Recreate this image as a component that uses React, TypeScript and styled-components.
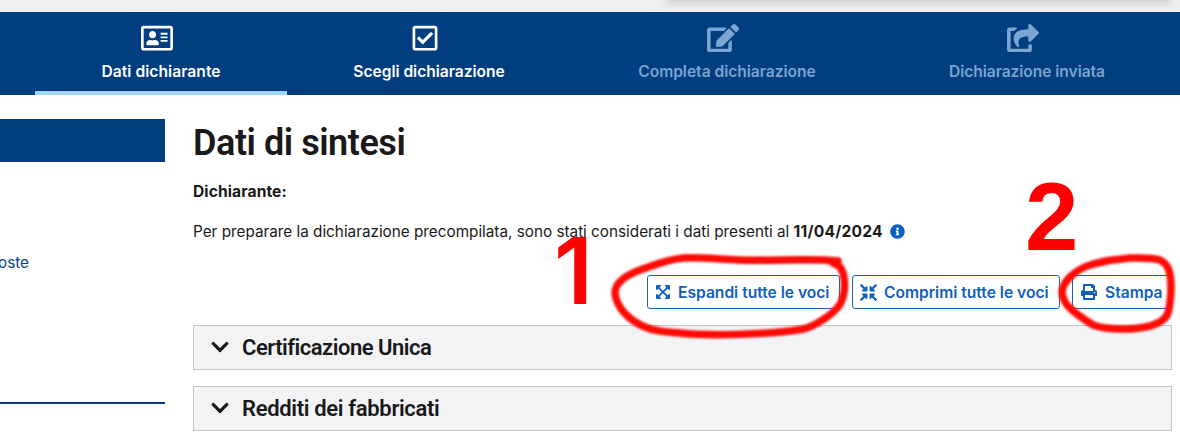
import React from 'react';
import styled, { createGlobalStyle } from 'styled-components';
import {
  FaRegAddressCard, FaRegCheckSquare, FaEdit, FaShareSquare, FaExpandArrowsAlt,
  FaCompressArrowsAlt, FaPrint, FaInfoCircle, FaChevronDown,
} from 'react-icons/fa';

const GlobalStyle = createGlobalStyle`
  *, *::before, *::after { box-sizing: border-box; }
  body { margin: 0; background: #fff; color: #19191a; font: 400 15.3px/24px Inter, sans-serif; overflow: hidden; }
`;

const Page = styled.div`
  position: relative;
  width: 1180px;
  height: 445px;
  overflow: hidden;
`;

const TopStrip = styled.div`
  height: 12px;
  padding-left: 668px;
  background: #eef0f0;
  overflow: hidden;
`;

const FloatingEdge = styled.div`
  width: 502px;
  height: 1px;
  background: #d4d6d6;
  box-shadow: 0 0 8px 3px #d2d4d4;
`;

const Steps = styled.nav`
  display: flex;
  height: 83px;
  padding-left: 35px;
  background: #003e80;
`;

const Step = styled.div<{ $width: number; $active?: boolean; $disabled?: boolean }>`
  display: flex;
  flex-direction: column;
  align-items: center;
  width: ${p => p.$width}px;
  padding-top: 12px;
  border-bottom: 4px solid ${p => (p.$active ? '#a3d4fb' : 'transparent')};
  color: ${p => (p.$disabled ? '#7ba5d2' : '#fff')};
  font-size: 15.6px;
  font-weight: 640;
  svg { display: block; width: 32px; height: 28.4px; margin: 0 8px 8px 0; }
`;

const Fit = styled.span<{ $spacing: number }>`
  letter-spacing: ${p => p.$spacing}px;
  white-space: nowrap;
`;

const Body = styled.div`
  display: flex;
  gap: 28px;
  padding-top: 24px;
`;

const Sidebar = styled.aside`
  width: 165px;
  height: 285px;
  border-bottom: 2px solid #003e80;
`;

const SidebarTitle = styled.div`
  height: 43px;
  background: #003e80;
`;

const SidebarLink = styled.a`
  display: block;
  margin: 89px 0 0 -2px;
  color: #0a4583;
`;

const Main = styled.main`
  width: 979px;
`;

const Title = styled.h1`
  margin: 0;
  font: 600 36px/48px Roboto, sans-serif;
`;

const Paragraph = styled.p`
  display: flex;
  align-items: center;
  margin: 13px 0 0;
  & + & { margin-top: 16px; }
  strong { font-size: 15.6px; font-weight: 680; }
  svg { margin: -1px 0 0 7px; color: #0b5fc0; }
`;

const Actions = styled.div`
  display: flex;
  justify-content: flex-end;
  gap: 12px;
  margin: 31px 0 16px;
`;

const Button = styled.button<{ $width: number }>`
  display: flex;
  align-items: center;
  gap: 7px;
  width: ${p => p.$width}px;
  height: 34px;
  padding: 1px 0 0 7px;
  border: 1px solid #1664b8;
  border-radius: 3px;
  background: #fff;
  color: #0f5fbc;
  font: 640 15.6px/24px Inter, sans-serif;
  svg { flex: none; margin-top: -1px; }
`;

const PrintButton = styled(Button)`
  gap: 8px;
  padding-left: 8px;
`;

const Section = styled.section`
  display: flex;
  align-items: center;
  gap: 12px;
  height: 45px;
  margin-bottom: 16px;
  padding-left: 16px;
  border: 1px solid #c3c5c7;
  background: #f3f3f6;
  font: 600 22px/30px Roboto, sans-serif;
  svg { width: 20px; height: 20px; margin-top: -2px; }
`;

const Digit = styled.span<{ $x: number; $y: number; $font: string }>`
  position: absolute;
  left: ${p => p.$x}px;
  top: ${p => p.$y}px;
  color: #fe0000;
  font: ${p => p.$font};
`;

const Marks = styled.svg`
  position: absolute;
  inset: 0;
  filter: blur(0.8px);
`;

export default function App() {
  return (
    <Page>
      <GlobalStyle />
      <TopStrip><FloatingEdge /></TopStrip>
      <Steps>
        <Step $width={252} $active><FaRegAddressCard /><Fit $spacing={0.05}>Dati dichiarante</Fit></Step>
        <Step $width={284}><FaRegCheckSquare /><Fit $spacing={-0.03}>Scegli dichiarazione</Fit></Step>
        <Step $width={312} $disabled><FaEdit /><Fit $spacing={-0.03}>Completa dichiarazione</Fit></Step>
        <Step $width={288} $disabled><FaShareSquare /><Fit $spacing={-0.06}>Dichiarazione inviata</Fit></Step>
      </Steps>
      <Body>
        <Sidebar>
          <SidebarTitle />
          <SidebarLink>oste</SidebarLink>
        </Sidebar>
        <Main>
          <Title><Fit $spacing={-0.45}>Dati di sintesi</Fit></Title>
          <Paragraph><strong><Fit $spacing={0.1}>Dichiarante:</Fit></strong></Paragraph>
          <Paragraph>
            <Fit $spacing={-0.01}>Per preparare la dichiarazione precompilata, sono stati considerati i dati presenti al&nbsp;</Fit>
            <strong><Fit $spacing={0.22}>11/04/2024</Fit></strong>
            <FaInfoCircle size={15} />
          </Paragraph>
          <Actions>
            <Button $width={193}><FaExpandArrowsAlt size={16} /><Fit $spacing={0}>Espandi tutte le voci</Fit></Button>
            <Button $width={208}><FaCompressArrowsAlt size={17} /><Fit $spacing={0}>Comprimi tutte le voci</Fit></Button>
            <PrintButton $width={100}><FaPrint size={16} /><Fit $spacing={0}>Stampa</Fit></PrintButton>
          </Actions>
          <Section><FaChevronDown /><Fit $spacing={-0.5}>Certificazione Unica</Fit></Section>
          <Section><FaChevronDown /><Fit $spacing={-0.33}>Redditi dei fabbricati</Fit></Section>
        </Main>
      </Body>
      <Digit $x={554} $y={222} $font='600 92px/98px Inter, sans-serif'>1</Digit>
      <Digit $x={1025} $y={168} $font='700 96px/98px "Liberation Sans", sans-serif'>2</Digit>
      <Marks width="1180" height="445" fill="none" stroke="#fe0a05" strokeWidth="7.5" strokeLinecap="round" strokeLinejoin="round">
        <path d="M838 261 C810 258 775 261 740 260 C715 259 700 257 683 258 C665 260 655 265 640 270 C624 276 615 284 615 293 C616 305 625 316 637 323 C650 331 665 332 680 333 C705 336 770 335 803 329 C813 327 819 322 827 317 C834 312 840 307 842 300 C845 292 845 281 843 273 C841 266 837 264 833 263" />
        <path d="M1160 260 C1150 257 1140 258 1130 258 C1117 259 1105 261 1093 264 C1083 267 1076 271 1070 277 C1064 283 1062 287 1062 293 C1063 299 1065 304 1070 308 C1077 315 1085 320 1093 325 C1101 328 1113 329 1123 329 C1134 329 1142 328 1150 326 C1160 323 1166 319 1168 313 C1170 305 1171 296 1171 287 C1171 280 1171 274 1168 268 C1166 264 1164 262 1160 260" />
      </Marks>
    </Page>
  );
}
